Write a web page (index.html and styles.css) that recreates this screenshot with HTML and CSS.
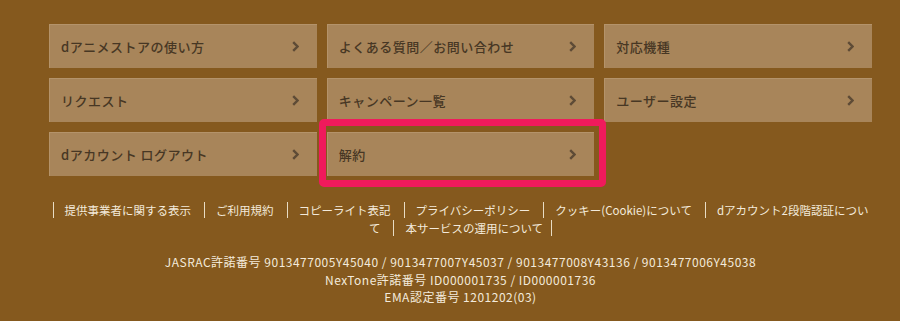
FILE: index.html
```html
<!DOCTYPE html>
<html lang="ja">
<head>
<meta charset="utf-8">
<link rel="stylesheet" href="styles.css">
</head>
<body>
<div class="footer">
  <div class="menu">
    <a class="btn" href="#"><span>dアニメストアの使い方</span><svg class="chev" viewBox="0 0 7 11"><path d="M1.2 1.2 L5.5 5.5 L1.2 9.8"/></svg></a>
    <a class="btn" href="#"><span>よくある質問／お問い合わせ</span><svg class="chev" viewBox="0 0 7 11"><path d="M1.2 1.2 L5.5 5.5 L1.2 9.8"/></svg></a>
    <a class="btn" href="#"><span>対応機種</span><svg class="chev" viewBox="0 0 7 11"><path d="M1.2 1.2 L5.5 5.5 L1.2 9.8"/></svg></a>
    <a class="btn" href="#"><span>リクエスト</span><svg class="chev" viewBox="0 0 7 11"><path d="M1.2 1.2 L5.5 5.5 L1.2 9.8"/></svg></a>
    <a class="btn" href="#"><span>キャンペーン一覧</span><svg class="chev" viewBox="0 0 7 11"><path d="M1.2 1.2 L5.5 5.5 L1.2 9.8"/></svg></a>
    <a class="btn" href="#"><span>ユーザー設定</span><svg class="chev" viewBox="0 0 7 11"><path d="M1.2 1.2 L5.5 5.5 L1.2 9.8"/></svg></a>
    <a class="btn" href="#"><span>dアカウント ログアウト</span><svg class="chev" viewBox="0 0 7 11"><path d="M1.2 1.2 L5.5 5.5 L1.2 9.8"/></svg></a>
    <a class="btn highlighted" href="#"><span>解約</span><svg class="chev" viewBox="0 0 7 11"><path d="M1.2 1.2 L5.5 5.5 L1.2 9.8"/></svg></a>
  </div>
  <p class="links"><a href="#">提供事業者に関する表示</a><a href="#">ご利用規約</a><a href="#">コピーライト表記</a><a href="#">プライバシーポリシー</a><a href="#">クッキー(Cookie)について</a><a href="#">dアカウント2段階認証について</a><a class="last" href="#">本サービスの運用について</a></p>
  <div class="legal">
    <p>JASRAC許諾番号 9013477005Y45040 / 9013477007Y45037 / 9013477008Y43136 / 9013477006Y45038</p>
    <p>NexTone許諾番号 ID000001735 / ID000001736</p>
    <p>EMA認定番号 1201202(03)</p>
  </div>
</div>
</body>
</html>
```
FILE: styles.css
```css
html, body {
  margin: 0;
  padding: 0;
}
body {
  background: #85591e;
  font-family: "Noto Sans CJK JP", "Noto Sans", sans-serif;
  width: 900px;
  height: 321px;
  overflow: hidden;
}
.footer {
  padding: 24px 28px 0 49px;
  width: 823px;
}
.menu {
  display: grid;
  grid-template-columns: repeat(3, 1fr);
  column-gap: 10px;
  row-gap: 10px;
}
.btn {
  position: relative;
  display: flex;
  align-items: center;
  justify-content: space-between;
  height: 44px;
  box-sizing: border-box;
  padding: 0 18px 0 11px;
  background: #a8855a;
  border-top: 1px solid #b4936a;
  border-left: 1px solid #b4936a;
  color: #473724;
  text-decoration: none;
  font-size: 13px;
  font-weight: 500;
  letter-spacing: 0.5px;
}
.chev {
  width: 7px;
  height: 11px;
  fill: none;
  stroke: #5e4b36;
  stroke-width: 2.4;
}
.highlighted::after {
  content: "";
  position: absolute;
  left: -9px;
  right: -12px;
  top: -14px;
  bottom: -11px;
  border: 7px solid #f01a5c;
  border-radius: 5px;
}
.links {
  margin: 25px 0 0 0;
  padding: 0;
  text-align: center;
  font-size: 11.5px;
  line-height: 18px;
}
.links a {
  color: #f3eadb;
  text-decoration: none;
  border-left: 1px solid #e8dcc4;
  padding: 0 13px 0 11px;
}
.links a.last {
  border-right: 1px solid #e8dcc4;
  padding-right: 8px;
}
.legal {
  margin-top: 16px;
  text-align: center;
  color: #f3eadb;
  font-size: 12px;
  letter-spacing: 0.5px;
  line-height: 17.5px;
}
.legal p {
  margin: 0;
}
```
